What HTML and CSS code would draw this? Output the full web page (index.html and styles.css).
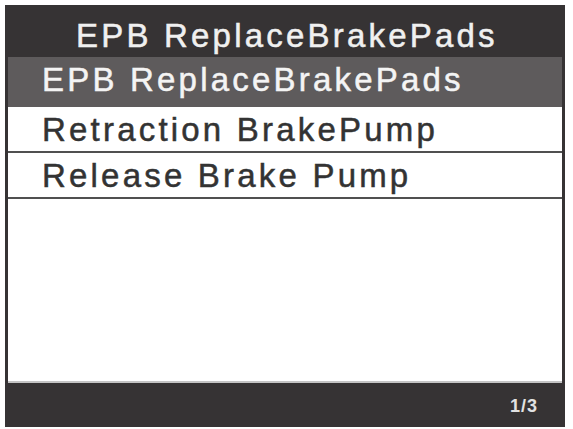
FILE: index.html
```html
<!DOCTYPE html>
<html lang="en">
<head>
    <meta charset="UTF-8">
    <meta name="viewport" content="width=device-width, initial-scale=1.0">
    <title>EPB ReplaceBrakePads</title>
    <link rel="stylesheet" href="styles.css">
</head>
<body>
    <div class="screen">
        <div class="title">EPB ReplaceBrakePads</div>

        <div class="menu">
            <div class="item selected">EPB ReplaceBrakePads</div>
            <div class="item">Retraction BrakePump</div>
            <div class="item">Release Brake Pump</div>
        </div>

        <div class="footer">
            <span class="page">1/3</span>
        </div>
    </div>
</body>
</html>
```

FILE: styles.css
```css
body {
    font-family: 'Liberation Sans', Arial, sans-serif;
    background-color: #ffffff;
    margin: 0;
    padding: 0;
}

.screen {
    margin: 5px 0 0 5px;
    width: 560px;
    height: 422px;
    background-color: #363334;
    display: flex;
    flex-direction: column;
}

.title {
    height: 52px;
    flex-shrink: 0;
    line-height: 61px;
    padding-left: 71px;
    color: #f0f0f0;
    font-size: 33px;
    letter-spacing: 3.2px;
    -webkit-text-stroke: 0.5px currentColor;
    overflow: hidden;
}

.menu {
    flex: 1;
    margin: 0 3px;
    background-color: #ffffff;
    border-bottom: 2px solid #c4c4c4;
}

.item {
    height: 44px;
    line-height: 45px;
    padding-left: 34px;
    color: #333333;
    font-size: 33px;
    letter-spacing: 3.2px;
    -webkit-text-stroke: 0.5px currentColor;
    border-bottom: 2px solid #505050;
    overflow: hidden;
}

.item.selected {
    height: 50px;
    background-color: #5e5b5c;
    color: #f4f4f4;
    border-bottom: none;
}

.footer {
    height: 44px;
    flex-shrink: 0;
    display: flex;
    align-items: center;
    justify-content: flex-end;
    padding: 3px 27px 0 0;
    box-sizing: border-box;
}

.page {
    color: #e2e2e2;
    font-size: 18px;
    font-weight: bold;
    letter-spacing: 1px;
}
```
